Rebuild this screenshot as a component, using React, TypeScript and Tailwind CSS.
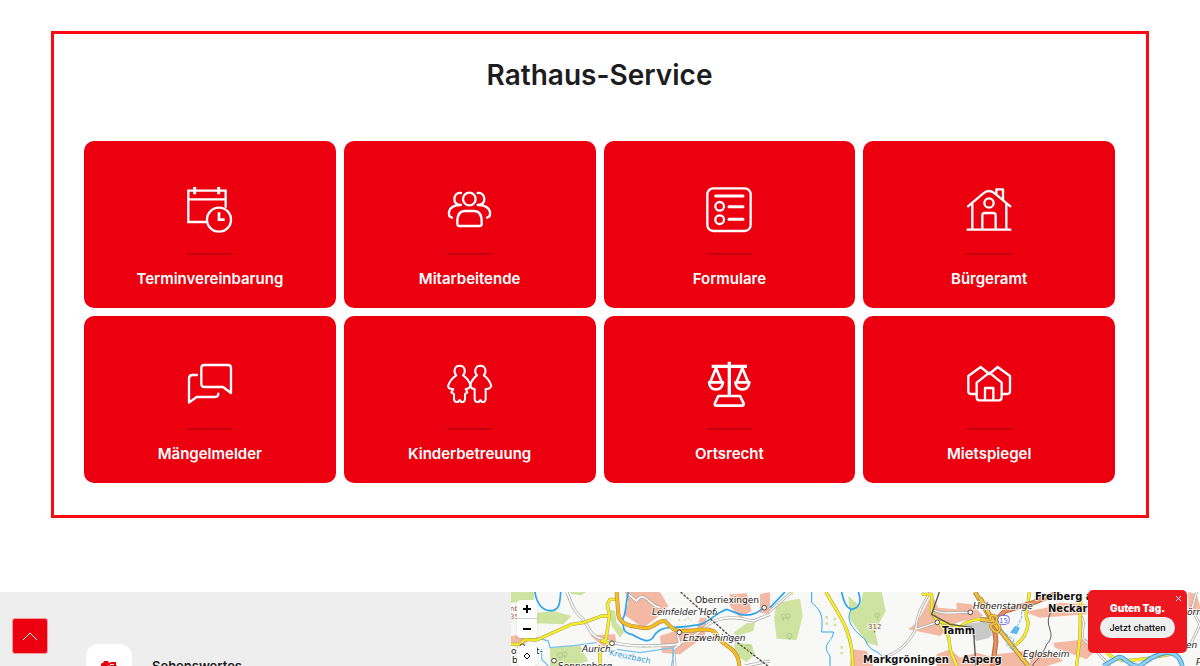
import type { ReactNode } from "react";

interface Service {
  label: string;
  viewBox: string;
  icon: ReactNode;
}

const services: Service[] = [
  {
    label: "Terminvereinbarung",
    viewBox: "52 36 135 135",
    icon: (
      <>
        <path d="M110 141H56V47H168V98M56 73H168" strokeLinecap="butt" strokeLinejoin="miter" />
        <path d="M75 36V58M147 36V58" strokeWidth="9" strokeLinecap="butt" />
        <circle cx="148" cy="134" r="36" />
        <path d="M148 112V134H165" strokeWidth="8" strokeLinecap="butt" strokeLinejoin="miter" />
      </>
    ),
  },
  {
    label: "Mitarbeitende",
    viewBox: "51 36 135 135",
    icon: (
      <>
        <circle cx="118" cy="72" r="19" />
        <path d="M82 140C82 118 90 108 105 108H132C148 108 155 120 155 140V146Q155 153 148 153H89Q82 153 82 146Z" />
        <path d="M93 54C80 52 73 62 73 72C73 84 80 90 93 90C76 90 60 96 57 110V118Q57 126 66 128" />
        <path d="M143 54C156 52 163 62 163 72C163 84 156 90 143 90C160 90 176 96 180 110V118Q180 126 171 128" />
      </>
    ),
  },
  {
    label: "Formulare",
    viewBox: "50 36 135 135",
    icon: (
      <>
        <rect x="51" y="40" width="130" height="128" rx="18" />
        <path d="M76 63H158M116 95H158M116 133H158" strokeWidth="9" />
        <circle cx="88" cy="94" r="13" />
        <circle cx="88" cy="134" r="13" />
      </>
    ),
  },
  {
    label: "Bürgeramt",
    viewBox: "50 36 135 135",
    icon: (
      <>
        <path d="M52 164H180M66 88V164M168 88V164" />
        <path d="M53 94L98 56Q116 40 134 56L180 94" />
        <path d="M138 56V43H158V74" />
        <circle cx="116" cy="84" r="14" />
        <path d="M96 162V121Q96 114 103 114H129Q136 114 136 121V162" />
      </>
    ),
  },
  {
    label: "Mängelmelder",
    viewBox: "52 36 135 135",
    icon: (
      <>
        <path d="M82 75H68Q58 75 58 86V158L81 141H132Q146 141 146 131" />
        <path d="M104 45H175Q184 45 184 54V129L160 111H104Q95 111 95 102V54Q95 45 104 45Z" />
      </>
    ),
  },
  {
    label: "Kinderbetreuung",
    viewBox: "51 36 135 135",
    icon: (
      <g strokeWidth="6">
        <path d="M79 76C69 66 73 47 89 47C105 47 109 66 99 76C109 82 118 95 122 106Q118 117 107 117L112 127L105 132V148Q103 158 94 156L89 150L84 156Q74 158 72 148V132L64 127L70 117Q56 118 54 108C58 96 68 83 79 76Z" />
        <path d="M141 76C131 66 135 47 151 47C167 47 171 66 161 76C171 82 180 95 184 108Q180 118 167 117V148Q165 158 156 156L151 150L146 156Q136 158 134 148V117Q124 118 120 106C124 95 132 82 141 76Z" />
      </g>
    ),
  },
  {
    label: "Ortsrecht",
    viewBox: "50 36 135 135",
    icon: (
      <g strokeWidth="8">
        <path d="M64 49H170M117 35V138" strokeLinecap="butt" strokeWidth="10" />
        <path d="M60 96L77 54L94 96M139 96L156 54L173 96" />
        <path d="M56 97H98Q95 118 77 118Q59 118 56 97ZM135 97H177Q174 118 156 118Q138 118 135 97Z" />
        <path d="M84 138H149L160 160Q161 167 154 167H79Q71 167 74 159Z" />
      </g>
    ),
  },
  {
    label: "Mietspiegel",
    viewBox: "50 36 135 135",
    icon: (
      <>
        <path d="M79 142V98L117 68L154 98V142Q154 151 146 151H87Q79 151 79 142Z" />
        <path d="M104 150V114H129V150" />
        <path d="M76 132H62Q54 132 54 124V78L91 51L117 72L142 51L179 78V124Q179 132 171 132H158" />
      </>
    ),
  },
];

function ServiceTile({ label, viewBox, icon }: Service) {
  return (
    <a
      href="#"
      className="flex h-[167px] flex-col items-center rounded-[10px] bg-[#ec0010] pt-[46px] text-white"
    >
      <svg
        viewBox={viewBox}
        className="size-[45px]"
        fill="none"
        stroke="currentColor"
        strokeWidth="7"
        strokeLinecap="round"
        strokeLinejoin="round"
        overflow="visible"
        aria-hidden="true"
      >
        {icon}
      </svg>
      <span className="mt-[21px] h-[2px] w-[45px] bg-[#c3000e]" />
      <span className="mt-3 text-[15px] leading-6 font-semibold">{label}</span>
    </a>
  );
}

// The three groups are neighbouring map sheets, drawn at triple scale.
function TownMap() {
  return (
    <svg
      viewBox="511 592 689 74"
      preserveAspectRatio="xMinYMin slice"
      className="block h-full w-full bg-[#f8f8f7]"
      fill="none"
      role="img"
      aria-label="Stadtplan"
    >
      <g transform="translate(500 586) scale(0.3333)" strokeLinejoin="round">
        <path d="M33 18H105L100 45L33 50ZM112 80L160 75L215 90L190 115L110 112ZM208 18H258L245 28L215 25ZM150 185L240 178L265 225L215 240H150ZM328 70L345 75L350 110L375 135L360 155L335 120ZM740 112L765 110L760 135L710 150L700 140ZM705 170L755 175L765 205L740 228L700 205Z" fill="#cfe3a0" />
        <path d="M33 150L80 145L85 165L60 185L33 178ZM375 18H480L505 60L470 95L430 125L370 85L385 50ZM270 148L345 145L350 172L310 182ZM480 150L555 125L590 130L600 95L620 95L615 150L540 205L485 200ZM690 25L740 22L755 75L720 95L690 60ZM780 25L810 18V85L780 80Z" fill="#f3b9a3" />
        <path d="M200 18C220 60 215 70 250 100C270 130 270 150 310 160C360 180 420 185 530 175C575 160 595 140 625 115C670 85 720 95 760 105L810 85M530 130L540 175L520 190L525 240M385 25L410 45C430 10 450 60 480 65M735 240L810 225" stroke="#a2a2a2" strokeWidth="9" />
        <path d="M200 18C220 60 215 70 250 100C270 130 270 150 310 160C360 180 420 185 530 175C575 160 595 140 625 115C670 85 720 95 760 105L810 85M530 130L540 175L520 190L525 240M385 25L410 45C430 10 450 60 480 65M735 240L810 225" stroke="#fff" strokeWidth="5" />
        <path d="M105 18C110 60 135 78 160 73C180 68 180 45 182 18M385 18C375 60 380 80 368 100C370 130 370 140 395 145C430 165 450 175 465 145C490 115 520 130 580 118C620 120 645 80 680 70C720 85 735 95 770 80L793 65" stroke="#29a5ee" strokeWidth="5" />
        <path d="M110 155L145 165L150 185L225 178L290 170M350 190L420 200L520 185V205L515 240M125 190V220L145 240" stroke="#77c3ed" strokeWidth="4" />
        <path d="M33 175H60L75 160L110 162L215 115L250 110L305 90H330M350 40H330L322 55L328 90L318 160L305 165L330 172M300 180V240" stroke="#aaa05a" strokeWidth="10" />
        <path d="M33 175H60L75 160L110 162L215 115L250 110L305 90H330M350 40H330L322 55L328 90L318 160L305 165L330 172M300 180V240" stroke="#f7ee26" strokeWidth="7" />
        <path d="M350 18L355 85Q360 118 410 122C465 140 465 100 495 105C515 125 520 140 570 134C620 128 645 125 655 155C675 185 715 185 718 240" stroke="#9d865a" strokeWidth="12" />
        <path d="M350 18L355 85Q360 118 410 122C465 140 465 100 495 105C515 125 520 140 570 134C620 128 645 125 655 155C675 185 715 185 718 240" stroke="#f7bd20" strokeWidth="9" />
        <path d="M542 18L700 160L810 245" stroke="#444" strokeWidth="4" strokeDasharray="8 4" />
        <path d="M490 72V82M512 72V80M548 84V94M565 94V102M410 182H470M535 102H575" stroke="#b8cf91" strokeWidth="3" strokeDasharray="6 12" />
        <g stroke="#a8bf7d" strokeWidth="2">
          <circle cx="180" cy="208" r="8" /><circle cx="194" cy="205" r="7" />
          <path d="M180 208V222M194 205V220" />
          <circle cx="745" cy="185" r="8" /><path d="M745 185V200" />
        </g>
        <g fill="#fff" stroke="#444" strokeWidth="3">
          <circle cx="644" cy="79" r="6" /><circle cx="793" cy="65" r="7" />
          <circle cx="538" cy="139" r="7" /><circle cx="336" cy="172" r="7" />
          <circle cx="162" cy="224" r="7" /><circle cx="67" cy="181" r="7" />
        </g>
      </g>
      <g transform="translate(770 586) scale(0.3333)" strokeLinejoin="round">
        <path d="M20 50L90 38L98 90L80 162L20 158L12 95ZM235 30L270 60L280 18H335L347 75L315 135L325 180L290 170L240 100Z" fill="#cfe3a0" />
        <path d="M485 25L505 65L560 70V50L605 55L640 90L560 110L510 150L415 130L440 110L465 65ZM245 190L290 195L310 240H240ZM500 205L540 190L570 215L620 200L690 220V240H500Z" fill="#f3b9a3" />
        <path d="M580 115L660 105V155L620 165Z" fill="#c9c9c9" />
        <path d="M0 75L65 18M480 18C450 70 440 90 437 130C400 200 360 205 330 220M437 130L500 110M490 72C530 90 550 75 600 80" stroke="#a2a2a2" strokeWidth="8" />
        <path d="M0 75L65 18M480 18C450 70 440 90 437 130C400 200 360 205 330 220M437 130L500 110M490 72C530 90 550 75 600 80" stroke="#fff" strokeWidth="4" />
        <path d="M0 65L45 18M215 18C225 65 235 65 245 70C270 65 275 45 265 18" stroke="#29a5ee" strokeWidth="5" />
        <path d="M125 18V50C165 80 155 110 155 138H190C190 170 150 170 180 210V240M245 70C220 105 260 140 285 160C300 200 320 190 335 210" stroke="#29a5ee" strokeWidth="3" />
        <path d="M168 18C200 80 250 130 248 240M455 25H485V80L535 150L542 195L560 240M485 80L505 105L570 125Q590 100 650 98L690 102" stroke="#aaa05a" strokeWidth="10" />
        <path d="M168 18C200 80 250 130 248 240M455 25H485V80L535 150L542 195L560 240M485 80L505 105L570 125Q590 100 650 98L690 102" stroke="#f7ee26" strokeWidth="7" />
        <path d="M508 18L485 85L540 115L610 125L618 240" stroke="#555" strokeWidth="4" />
        <path d="M615 18L660 95L690 130" stroke="#9d865a" strokeWidth="14" />
        <path d="M615 18L660 95L690 130" stroke="#eebd38" strokeWidth="9" />
        <path d="M65 18V35M170 90V120M195 95V125M215 180V205" stroke="#cfe3a0" strokeWidth="8" strokeDasharray="8 10" />
        <g stroke="#a8bf7d" strokeWidth="2">
          <circle cx="40" cy="92" r="7" /><circle cx="54" cy="90" r="7" />
          <path d="M40 92V105M54 90V104M58 150V162M322 88V102" />
          <circle cx="58" cy="150" r="8" /><circle cx="322" cy="88" r="7" />
        </g>
        <circle cx="314" cy="137" r="2" fill="#874238" />
        <g fill="#fff" stroke="#444" strokeWidth="3">
          <circle cx="502" cy="109" r="7" /><circle cx="601" cy="79" r="7" />
        </g>
      </g>
      <g transform="translate(980 586) scale(0.3333)" strokeLinejoin="round">
        <path d="M145 75L200 65L240 50L320 55V85L180 95L140 80ZM220 170L320 160L350 190L320 220L225 185ZM50 205L130 195L145 240H60ZM150 195L215 200L250 225L200 240H150ZM625 18L650 25L660 60V80H625Z" fill="#f3b9a3" />
        <path d="M0 105L35 115V150L0 145Z" fill="#c9c9c9" />
        <path d="M215 75C185 120 235 140 200 175C180 225 165 220 158 240" stroke="#555" strokeWidth="3" />
        <path d="M300 85C330 125 280 150 330 175L390 240M650 18L635 70L660 115L630 180" stroke="#a2a2a2" strokeWidth="8" />
        <path d="M300 85C330 125 280 150 330 175L390 240M650 18L635 70L660 115L630 180" stroke="#fff" strokeWidth="4" />
        <path d="M148 18C145 70 130 80 145 110Q140 160 100 180M302 30L300 150L290 240M380 200C420 240 480 220 570 205" stroke="#aaa05a" strokeWidth="10" />
        <path d="M148 18C145 70 130 80 145 110Q140 160 100 180M302 30L300 150L290 240M380 200C420 240 480 220 570 205" stroke="#f7ee26" strokeWidth="7" />
        <path d="M40 110L75 75L160 50L240 18M42 120L48 165L38 240" stroke="#9b684f" strokeWidth="15" />
        <path d="M40 110L75 75L160 50L240 18M42 120L48 165L38 240" stroke="#ef8b54" strokeWidth="10" />
        <path d="M0 35L45 115L145 240M0 100L40 105" stroke="#9d865a" strokeWidth="14" />
        <path d="M0 35L45 115L145 240M0 100L40 105" stroke="#f4c43b" strokeWidth="9" />
        <path d="M32 103C20 80 65 85 48 108C65 112 62 150 42 135C25 120 30 115 48 112" stroke="#9a733b" strokeWidth="9" />
        <path d="M32 103C20 80 65 85 48 108C65 112 62 150 42 135C25 120 30 115 48 112" stroke="#f4c43b" strokeWidth="6" />
        <path d="M65 135L100 160V195L75 170M125 75V95L110 125" stroke="#55b3e8" strokeWidth="3" strokeDasharray="10 4" />
        <path d="M90 140L105 120L120 125L110 145Z" fill="#5ab9ef" />
        <path d="M370 240L405 220C430 195 440 245 480 240C530 200 590 175 607 240" stroke="#369ace" strokeWidth="14" />
        <path d="M370 240L405 220C430 195 440 245 480 240C530 200 590 175 607 240" stroke="#91cff1" strokeWidth="9" />
        <rect x="54" y="88" width="34" height="27" rx="12" fill="#fff" stroke="#5961dd" strokeWidth="3" />
      </g>
      <g
        fontFamily="DejaVu Sans, sans-serif"
        fontSize="9"
        fill="#222"
        stroke="#fff"
        strokeWidth="2"
        strokeOpacity="0.7"
        paintOrder="stroke"
      >
        <text x="695" y="603">Oberriexingen</text>
        <g fontStyle="italic">
          <text x="652" y="615">Leinfelder Hof</text>
          <text x="683" y="641">Enzweihingen</text>
          <text x="582" y="652">Aurich</text>
          <text x="973" y="609">Hohenstange</text>
          <text x="1023" y="657">Eglosheim</text>
          <text x="1187" y="615">örn</text>
          <text x="1186" y="648">en</text>
          <text x="1196" y="665">P</text>
        </g>
        <text x="558" y="669">Sonnenberg</text>
        <text x="511" y="654">ol</text>
        <text x="536" y="654">t-</text>
        <text x="512" y="663">b</text>
        <text x="609" y="655" fontSize="8" fill="#2998d5" transform="rotate(12 609 655)">Kreuzbach</text>
        <text x="868" y="629" fontSize="7" fill="#874238">312</text>
        <text x="510" y="611" fontSize="7" fill="#a05c45">nb</text>
        <text x="510" y="619" fontSize="7" fill="#a05c45">35</text>
        <text x="999" y="623" fontSize="7" fill="#5961dd">15</text>
        <g fontWeight="bold" fontSize="10" fill="#111">
          <text x="942" y="634">Tamm</text>
          <text x="863" y="663">Markgröningen</text>
          <text x="962" y="663">Asperg</text>
          <text x="1035" y="600">Freiberg a</text>
          <text x="1048" y="612">Neckar</text>
        </g>
      </g>
    </svg>
  );
}

function MapControls() {
  return (
    <div className="absolute top-2 left-[6px] flex w-5 flex-col text-black">
      <button type="button" aria-label="Vergrößern" className="flex h-[19px] items-center justify-center rounded-t-sm border-b border-gray-300 bg-white shadow">
        <svg viewBox="0 0 8 8" className="size-2" stroke="currentColor" strokeWidth="2">
          <path d="M0 4H8M4 0V8" />
        </svg>
      </button>
      <button type="button" aria-label="Verkleinern" className="flex h-[19px] items-center justify-center rounded-b-sm bg-white shadow">
        <svg viewBox="0 0 8 8" className="size-2" stroke="currentColor" strokeWidth="2">
          <path d="M0 4H8" />
        </svg>
      </button>
      <button type="button" aria-label="Standort" className="mt-2 flex h-5 items-center justify-center rounded-sm bg-white shadow">
        <svg viewBox="0 0 8 8" className="size-2" fill="none" stroke="currentColor">
          <path d="M4 1L7 4L4 7L1 4Z" />
        </svg>
      </button>
    </div>
  );
}

function SightsIcon() {
  return (
    <svg viewBox="0 0 16 13" className="h-[13px] w-4" aria-hidden="true">
      <path d="M0 3Q0 2 2 2L3 0H7L8 2L10 1H15V4L16 5V13H0Z" fill="#ec0010" />
      <path d="M9 3H13V4H9ZM3 5H5V6H3Z" fill="#fff" />
      <circle cx="8" cy="8" r="3" fill="#ec0010" stroke="#fff" />
    </svg>
  );
}

export default function App() {
  return (
    <div className="flex h-screen flex-col overflow-hidden bg-white font-['Inter',sans-serif] text-[#1d1d1f]">
      <main className="mx-[51px] mt-[31px] shrink-0 border-[3px] border-[#fb0a12] pt-[23px] pr-[31px] pb-8 pl-[30px]">
        <h1 className="text-center text-[28px] leading-9 font-semibold">Rathaus-Service</h1>
        <div className="mt-12 grid grid-cols-4 gap-2">
          {services.map((service) => (
            <ServiceTile key={service.label} {...service} />
          ))}
        </div>
      </main>

      <section className="mt-[74px] flex min-h-0 flex-1 bg-[#eee]">
        <div className="w-[42.6%] shrink-0 pt-[52px] pl-[86px]">
          <a href="#" className="flex items-center gap-5">
            <span className="flex size-[46px] items-center justify-center rounded-xl bg-white">
              <SightsIcon />
            </span>
            <span className="text-[13px] font-semibold">Sehenswertes</span>
          </a>
        </div>
        <div className="relative min-w-0 flex-1">
          <TownMap />
          <MapControls />
        </div>
      </section>

      <a
        href="#"
        aria-label="Nach oben"
        className="fixed bottom-3 left-3 flex size-9 items-center justify-center rounded-[3px] border border-white/60 bg-[#ec0010] text-white"
      >
        <svg viewBox="0 0 16 9" className="h-[9px] w-4" fill="none" stroke="currentColor">
          <path d="M1 8L8 1L15 8" />
        </svg>
      </a>

      <aside className="fixed right-[13px] bottom-[13px] flex h-[63px] w-[99px] flex-col items-center rounded-[5px] bg-[#ed1720] pt-[11px] text-white">
        <button type="button" aria-label="Schließen" className="absolute top-[5px] right-[5px]">
          <svg viewBox="0 0 7 7" className="size-[7px]" stroke="currentColor">
            <path d="M1 1L6 6M6 1L1 6" />
          </svg>
        </button>
        <strong className="text-[10px] leading-[14px] font-black">Guten Tag.</strong>
        <button type="button" className="mt-[2px] h-[21px] w-[75px] rounded-full bg-[#eee] text-[9px] font-medium whitespace-nowrap text-black">
          Jetzt chatten
        </button>
      </aside>
    </div>
  );
}
